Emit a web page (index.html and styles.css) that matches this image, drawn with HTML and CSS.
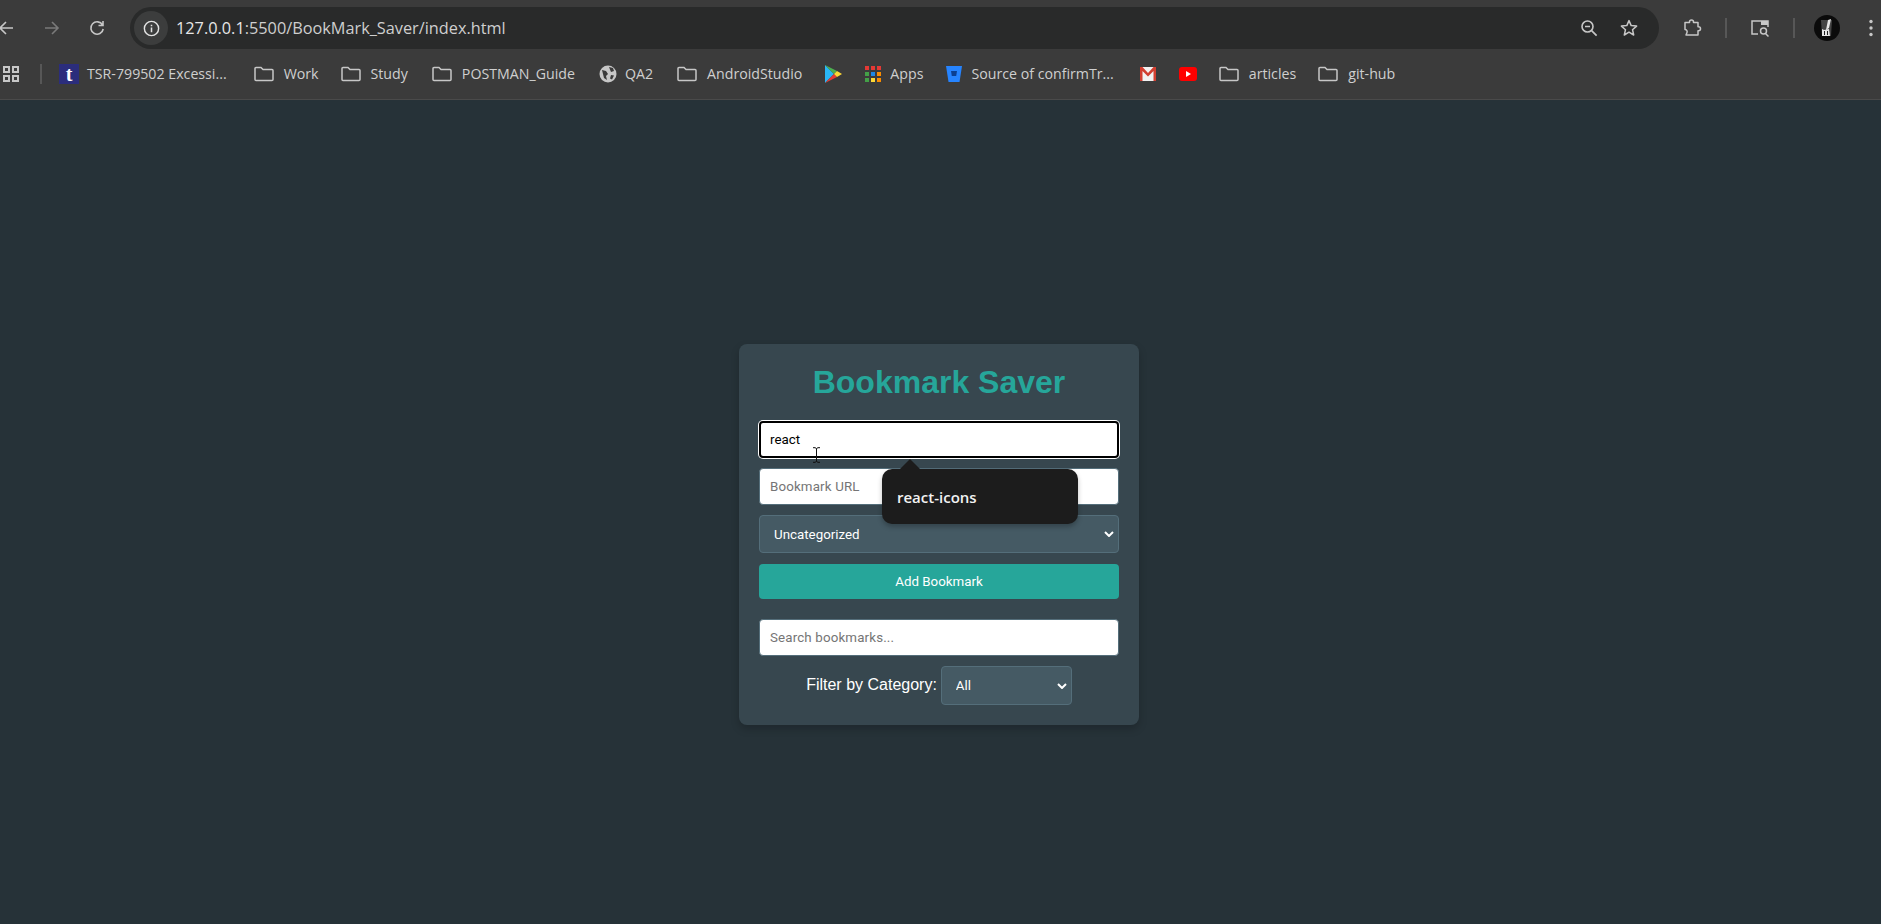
FILE: index.html
```html
<!DOCTYPE html>
<html lang="en">
<head>
<meta charset="utf-8">
<title>Bookmark Saver</title>
<link rel="stylesheet" href="styles.css">
</head>
<body>
<header class="chrome">
  <div class="toolbar">
    <div class="nav">
      <svg class="ico" viewBox="0 0 20 20"><path d="M16 10H3M9 4l-6 6 6 6" fill="none" stroke="#c7c7c7" stroke-width="1.6"/></svg>
      <svg class="ico" viewBox="0 0 20 20"><path d="M4 10h13M11 4l6 6-6 6" fill="none" stroke="#7a7a7a" stroke-width="1.6"/></svg>
      <svg class="ico ico-reload" viewBox="0 0 20 20"><path d="M15.5 7A6.2 6.2 0 1 0 16.2 11M16 3v4.5h-4.5" fill="none" stroke="#c7c7c7" stroke-width="1.6"/></svg>
    </div>
    <div class="omnibox">
      <span class="site-info"><svg viewBox="0 0 20 20" width="19" height="19"><circle cx="10" cy="10" r="7.5" fill="none" stroke="#e3e3e3" stroke-width="1.5"/><path d="M10 9v5M10 6v1.6" stroke="#e3e3e3" stroke-width="1.6"/></svg></span>
      <span class="url">127.0.0.1<span class="url-dim">:5500/BookMark_Saver/index.html</span></span>
      <span class="omni-actions">
        <svg class="ico" viewBox="0 0 20 20"><circle cx="8.5" cy="8.5" r="5.5" fill="none" stroke="#c7c7c7" stroke-width="1.6"/><path d="M6 8.5h5M12.6 12.6l5 5" stroke="#c7c7c7" stroke-width="1.6"/></svg>
        <svg class="ico" viewBox="0 0 20 20"><path d="M10 2.6l2.2 5 5.4.5-4.1 3.6 1.2 5.3L10 14.2 5.3 17l1.2-5.3-4.1-3.6 5.4-.5z" fill="none" stroke="#c7c7c7" stroke-width="1.5" stroke-linejoin="round"/></svg>
      </span>
    </div>
    <div class="tools">
      <svg class="ico" viewBox="0 0 20 20"><path d="M3 4.500h4.500V4a2 2 0 0 1 4 0v.5H16v4.200h.5a2 2 0 0 1 0 4H16V17H4l1-2.500c.6-1.600-.6-3-2-3V4.500z" fill="none" stroke="#c7c7c7" stroke-width="1.5" stroke-linejoin="round"/></svg>
      <span class="tool-sep"></span>
      <svg class="ico" viewBox="0 0 20 20"><path d="M8 16H2V3h16v6" fill="none" stroke="#c7c7c7" stroke-width="1.5"/><path d="M11 3h7v4h-7z" fill="#c7c7c7"/><circle cx="13.500" cy="13" r="3" fill="none" stroke="#c7c7c7" stroke-width="1.500"/><path d="M15.500 15.500l3 3" stroke="#c7c7c7" stroke-width="1.500"/></svg>
      <span class="tool-sep"></span>
      <svg class="avatar" viewBox="0 0 26 26"><circle cx="13" cy="13" r="13" fill="#0b0b0b"/><path d="M7 5h11l-1 16H8z" fill="#444"/><path d="M14 5l3-1-2 9-3 2zM8 14l2 1 5-1 1 7H8z" fill="#e6e6e6"/><path d="M10 16h1v4h-1zM13 16h1v4h-1z" fill="#222"/></svg>
      <svg class="dots" viewBox="0 0 6 20"><circle cx="3" cy="3.500" r="1.700" fill="#c7c7c7"/><circle cx="3" cy="10" r="1.700" fill="#c7c7c7"/><circle cx="3" cy="16.500" r="1.700" fill="#c7c7c7"/></svg>
    </div>
  </div>
  <nav class="bookmarks">
    <svg class="apps" viewBox="0 0 16 16"><path d="M1 1h5v5H1zM10 1h5v5h-5zM1 10h5v5H1zM10 10h5v5h-5z" fill="none" stroke="#c7c7c7" stroke-width="2"/></svg>
    <span class="bar-sep"></span>
    <span class="bm bm-tsr"><span class="fav-t">t</span><span>TSR-799502 Excessi...</span></span>
    <span class="bm"><svg class="folder" viewBox="0 0 20 16"><path d="M1 2.500a1 1 0 0 1 1-1h5l2 2h9a1 1 0 0 1 1 1v9a1 1 0 0 1-1 1H2a1 1 0 0 1-1-1z" fill="none" stroke="#c7c7c7" stroke-width="1.500"/></svg><span>Work</span></span>
    <span class="bm bm-wide"><svg class="folder" viewBox="0 0 20 16"><path d="M1 2.500a1 1 0 0 1 1-1h5l2 2h9a1 1 0 0 1 1 1v9a1 1 0 0 1-1 1H2a1 1 0 0 1-1-1z" fill="none" stroke="#c7c7c7" stroke-width="1.500"/></svg><span>Study</span></span>
    <span class="bm bm-wide"><svg class="folder" viewBox="0 0 20 16"><path d="M1 2.500a1 1 0 0 1 1-1h5l2 2h9a1 1 0 0 1 1 1v9a1 1 0 0 1-1 1H2a1 1 0 0 1-1-1z" fill="none" stroke="#c7c7c7" stroke-width="1.500"/></svg><span>POSTMAN_Guide</span></span>
    <span class="bm bm-fav bm-wide"><svg class="fav" viewBox="0 0 18 18"><circle cx="9" cy="9" r="8.500" fill="#c7c7c7"/><path d="M3 5l4 1 2 3-2 2 1 4-3-2-1-4zM10 2l4 1 1 3-3 1zM12 10l3 .5-2 4-2-1z" fill="#3b3b3b"/></svg><span>QA2</span></span>
    <span class="bm"><svg class="folder" viewBox="0 0 20 16"><path d="M1 2.500a1 1 0 0 1 1-1h5l2 2h9a1 1 0 0 1 1 1v9a1 1 0 0 1-1 1H2a1 1 0 0 1-1-1z" fill="none" stroke="#c7c7c7" stroke-width="1.500"/></svg><span>AndroidStudio</span></span>
    <span class="bm"><svg class="fav" viewBox="0 0 18 18"><path d="M1 0l9 9-9 9z" fill="#29b6f6"/><path d="M1 0l12 6-3 3z" fill="#4caf50"/><path d="M1 18l12-6-3-3z" fill="#e53935"/><path d="M13 6l5 3-5 3-3-3z" fill="#fdd835"/></svg></span>
    <span class="bm bm-fav"><svg class="fav" viewBox="0 0 18 18"><path d="M1 1h4v4H1z" fill="#e53935"/><path d="M7 1h4v4H7z" fill="#e53935"/><path d="M13 1h4v4h-4z" fill="#e53935"/><path d="M1 7h4v4H1z" fill="#43a047"/><path d="M7 7h4v4H7z" fill="#1e88e5"/><path d="M13 7h4v4h-4z" fill="#fb8c00"/><path d="M1 13h4v4H1z" fill="#43a047"/><path d="M7 13h4v4H7z" fill="#fdd835"/><path d="M13 13h4v4h-4z" fill="#fb8c00"/></svg><span>Apps</span></span>
    <span class="bm bm-fav bm-src"><svg class="fav" viewBox="0 0 18 18"><path d="M1 1h16l-2.500 16h-11z" fill="#2684ff"/><path d="M6 6h6l-.8 5H6.800z" fill="#0b3f91"/></svg><span>Source of confirmTr...</span></span>
    <span class="bm"><svg class="fav" viewBox="0 0 18 16"><path d="M1 1h16v14H1z" fill="#f2f2f2"/><path d="M1 1h2.500L9 7l5.500-6H17v14h-2.500V5L9 10.500 3.500 5v10H1z" fill="#d23f31"/></svg></span>
    <span class="bm"><svg class="fav" viewBox="0 0 18 14"><rect width="18" height="14" rx="3" fill="#f00"/><path d="M7 4l5 3-5 3z" fill="#fff"/></svg></span>
    <span class="bm"><svg class="folder" viewBox="0 0 20 16"><path d="M1 2.500a1 1 0 0 1 1-1h5l2 2h9a1 1 0 0 1 1 1v9a1 1 0 0 1-1 1H2a1 1 0 0 1-1-1z" fill="none" stroke="#c7c7c7" stroke-width="1.500"/></svg><span>articles</span></span>
    <span class="bm"><svg class="folder" viewBox="0 0 20 16"><path d="M1 2.500a1 1 0 0 1 1-1h5l2 2h9a1 1 0 0 1 1 1v9a1 1 0 0 1-1 1H2a1 1 0 0 1-1-1z" fill="none" stroke="#c7c7c7" stroke-width="1.500"/></svg><span>git-hub</span></span>
  </nav>
</header>
<main class="page">
  <section class="card">
    <h1 class="title">Bookmark Saver</h1>
    <form class="form">
      <div class="field">
        <input class="input input-focus" type="text" value="react" placeholder="Bookmark Name">
        <div class="suggest"><span class="suggest-arrow"></span>react-icons</div>
        <svg class="cursor" viewBox="0 0 9 16"><path d="M1 .7h2.500L4.500 2l1-1.300H8M4.500 2v12M1 15.300h2.500l1-1.300 1 1.300H8" fill="none" stroke="#111" stroke-width="1"/></svg>
      </div>
      <input class="input" type="text" placeholder="Bookmark URL">
      <select class="select select-wide"><option>Uncategorized</option></select>
      <button class="add" type="button">Add Bookmark</button>
    </form>
    <input class="input search" type="text" placeholder="Search bookmarks...">
    <div class="filter">
      <label class="filter-label" for="cat">Filter by Category:</label>
      <select class="select select-filter" id="cat"><option>All</option></select>
    </div>
  </section>
</main>
</body>
</html>
```
FILE: styles.css
```css
* { box-sizing: border-box; }
html, body { margin: 0; height: 100%; overflow: hidden; }
body { background: #263238; font-family: "Liberation Sans", Arial, sans-serif; display: flex; flex-direction: column; }
.chrome { background: #3b3b3b; height: 100px; border-bottom: 1px solid #4a4a4a; font-family: "Open Sans", "Noto Sans", sans-serif; flex: none; }
.toolbar { height: 56px; display: flex; align-items: center; }
.nav { width: 130px; flex: none; display: flex; align-items: center; gap: 24px; margin-left: -3px; }
.ico { width: 20px; height: 20px; flex: none; }
.ico-reload { margin-left: 2px; }
.omnibox { flex: none; width: 1529px; height: 42px; margin-left: 3px; background: #292a2a; border-radius: 21px; display: flex; align-items: center; padding: 0 20px 0 4px; }
.site-info { width: 34px; height: 34px; border-radius: 50%; background: #3c3d3d; display: flex; align-items: center; justify-content: center; flex: none; }
.url { margin-left: 8px; color: #e6e6e6; font-size: 16.3px; }
.url-dim { color: #cfcfcf; }
.omni-actions { margin-left: auto; display: flex; gap: 20px; }
.tools { flex: 1; display: flex; align-items: center; padding-left: 23px; min-width: 0; }
.tool-sep { width: 2px; height: 20px; background: #575757; margin: 0 23px; flex: none; }
.avatar { width: 26px; height: 26px; flex: none; margin-left: -4px; }
.dots { width: 6px; height: 20px; flex: none; margin-left: 28px; }
.bookmarks { height: 35px; display: flex; align-items: center; padding-left: 3px; color: #cfcfcf; font-size: 14.2px; white-space: nowrap; }
.apps { width: 16px; height: 16px; flex: none; }
.bar-sep { width: 2px; height: 20px; background: #575757; margin: 0 17px 0 21px; flex: none; }
.bm { display: flex; align-items: center; gap: 10px; margin-right: 22px; }
.bm-tsr { gap: 8px; margin-right: 27px; }
.bm-fav { gap: 8px; }
.bm-wide { margin-right: 24px; }
.bm-src { margin-right: 25px; }
.fav-t { width: 20px; height: 20px; background: #2b2d7c; color: #fff; font: bold 20px/20px "Liberation Serif", serif; text-align: center; }
.folder { width: 20px; height: 16px; flex: none; }
.fav { width: 18px; height: 18px; flex: none; }
.page { flex: 1; padding-top: 244px; display: flex; justify-content: center; align-items: flex-start; }
.card { width: 400px; background: #37474f; border-radius: 8px; padding: 20px; box-shadow: 0 4px 8px rgba(0,0,0,.2); display: flex; flex-direction: column; margin-left: -3px; }
.title { margin: 0 0 20px; color: #26a69a; font-size: 32px; line-height: 37px; text-align: center; font-weight: 700; }
.form { display: flex; flex-direction: column; gap: 10px; }
.field { position: relative; display: flex; }
.input { width: 100%; height: 37px; padding: 10px; border: 1px solid #546e7a; border-radius: 4px; background: #fff; color: #000; font-family: Roboto, sans-serif; font-size: 13.33px; outline: none; }
.input::placeholder { color: #757575; letter-spacing: 0.15px; }
.input-focus { border: 2px solid #000; box-shadow: 0 0 0 1px #fff; padding: 9px; }
.select { appearance: none; font-family: Roboto, sans-serif; font-size: 13.33px; color: #fff; background: #455a64 url("data:image/svg+xml,%3Csvg xmlns='http://www.w3.org/2000/svg' width='10' height='6' viewBox='0 0 10 6'%3E%3Cpath d='M1 1l4 4 4-4' fill='none' stroke='%23fff' stroke-width='2'/%3E%3C/svg%3E") no-repeat right 4px center; border: 1px solid #546e7a; border-radius: 4px; padding: 10px 20px 10px 14px; }
.select-wide { width: 100%; height: 38px; }
.add { height: 35px; margin-top: 1px; border: 0; border-radius: 4px; background: #26a69a; color: #fff; font-family: Roboto, sans-serif; font-size: 13.33px; }
.search { margin-top: 20px; }
.filter { margin-top: 10px; height: 39px; display: flex; align-items: center; justify-content: center; gap: 4px; color: #fff; font-size: 16px; }
.filter-label { padding-bottom: 2px; }
.select-filter { width: 131px; height: 39px; }
.suggest { position: absolute; left: 123px; top: 48px; width: 196px; height: 55px; padding-left: 15px; display: flex; align-items: center; background: #1c1c1c; border-radius: 10px; color: #f2f2f2; font-family: "Open Sans", sans-serif; font-weight: 600; font-size: 15px; box-shadow: 0 3px 5px rgba(0,0,0,.25); z-index: 2; }
.suggest-arrow { position: absolute; left: 18px; top: -10px; width: 0; height: 0; border-left: 10px solid transparent; border-right: 10px solid transparent; border-bottom: 10px solid #1c1c1c; }
.cursor { position: absolute; left: 53px; top: 26px; width: 9px; height: 16px; z-index: 3; }
```
